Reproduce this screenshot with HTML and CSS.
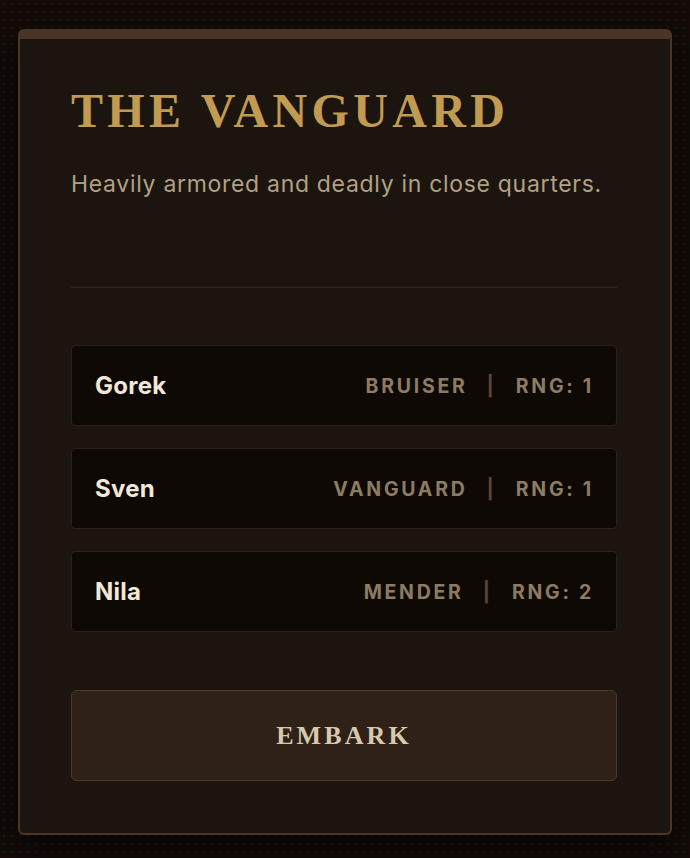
FILE: index.html
```html
<!DOCTYPE html>
<html lang="en">
<head>
<meta charset="utf-8">
<title>The Vanguard</title>
<link rel="stylesheet" href="styles.css">
</head>
<body>
<main class="card">
  <header class="card-header">
    <h1 class="title">THE VANGUARD</h1>
    <p class="subtitle">Heavily armored and deadly in close quarters.</p>
  </header>
  <ul class="roster">
    <li class="unit">
      <span class="unit-name">Gorek</span>
      <span class="unit-meta"><span class="unit-role">BRUISER</span><span class="sep">|</span><span class="unit-rng">RNG: 1</span></span>
    </li>
    <li class="unit">
      <span class="unit-name">Sven</span>
      <span class="unit-meta"><span class="unit-role">VANGUARD</span><span class="sep">|</span><span class="unit-rng">RNG: 1</span></span>
    </li>
    <li class="unit">
      <span class="unit-name">Nila</span>
      <span class="unit-meta"><span class="unit-role">MENDER</span><span class="sep">|</span><span class="unit-rng">RNG: 2</span></span>
    </li>
  </ul>
  <button class="embark" type="button">EMBARK</button>
</main>
</body>
</html>
```

FILE: styles.css
```css
html, body {
  margin: 0;
  padding: 0;
}

body {
  background-color: #120b08;
  background-image: radial-gradient(circle, #21160f 0.8px, transparent 1.2px);
  background-size: 8px 8px;
  min-height: 858px;
  padding-top: 29px;
  box-sizing: border-box;
  font-family: Inter, "Noto Sans", sans-serif;
}

.card {
  width: 654px;
  margin: 0 auto;
  box-sizing: border-box;
  background: #1c140f;
  border: 2px solid #4b3527;
  border-top-width: 10px;
  border-radius: 6px;
  padding: 48px 53px 52px 51px;
  box-shadow: 0 10px 30px rgba(0, 0, 0, 0.65);
}

.card-header {
  padding-bottom: 87px;
  border-bottom: 1px solid #34271c;
}

.title {
  margin: 0;
  font-family: "Liberation Serif", "Times New Roman", serif;
  font-weight: 700;
  font-size: 48px;
  line-height: 1;
  letter-spacing: 0.09em;
  color: #c19b51;
}

.subtitle {
  margin: 33px 0 0;
  font-size: 23px;
  line-height: 32px;
  letter-spacing: 0.03em;
  color: #b1a184;
}

.roster {
  list-style: none;
  margin: 57px 0 0;
  padding: 0;
  display: flex;
  flex-direction: column;
  gap: 22px;
}

.unit {
  height: 81px;
  box-sizing: border-box;
  display: flex;
  align-items: center;
  justify-content: space-between;
  padding: 0 22px 0 23px;
  background: #0f0906;
  border: 1px solid #2c1f15;
  border-radius: 4px;
}

.unit-name {
  font-size: 24px;
  font-weight: 700;
  letter-spacing: 0.01em;
  color: #f0e8d8;
}

.unit-meta {
  display: flex;
  align-items: center;
  font-size: 19.5px;
  font-weight: 700;
  letter-spacing: 0.14em;
  color: #8b7c63;
}

.sep {
  color: #5c4433;
  margin: 0 22px 0 19px;
  letter-spacing: 0;
}

.embark {
  display: block;
  width: 100%;
  height: 91px;
  margin-top: 58px;
  background: #2f2018;
  border: 1px solid #4e3829;
  border-radius: 6px;
  font-family: "Liberation Serif", "Times New Roman", serif;
  font-weight: 700;
  font-size: 26px;
  letter-spacing: 0.12em;
  color: #d6c9ad;
  cursor: pointer;
}
```
